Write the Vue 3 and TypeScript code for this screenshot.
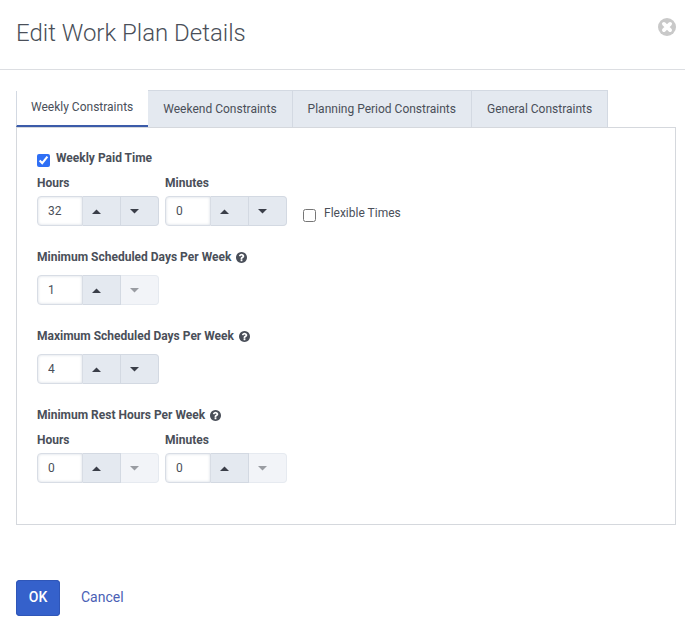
<script setup lang="ts">
import { ref } from 'vue'

interface Field {
  id: string
  label: string
  value: number
  min: number
  max: number
}

interface Group {
  id: string
  title: string
  toggle: boolean
  fields: Field[]
}

const tabs: string[] = [
  'Weekly Constraints',
  'Weekend Constraints',
  'Planning Period Constraints',
  'General Constraints',
]
const activeTab = ref(0)
const weeklyPaid = ref(true)
const flexible = ref(false)

const groups = ref<Group[]>([
  {
    id: 'paid',
    title: 'Weekly Paid Time',
    toggle: true,
    fields: [
      { id: 'paid-hours', label: 'Hours', value: 32, min: 0, max: 168 },
      { id: 'paid-minutes', label: 'Minutes', value: 0, min: -1, max: 59 },
    ],
  },
  {
    id: 'min-days',
    title: 'Minimum Scheduled Days Per Week',
    toggle: false,
    fields: [{ id: 'min-days-value', label: '', value: 1, min: 1, max: 7 }],
  },
  {
    id: 'max-days',
    title: 'Maximum Scheduled Days Per Week',
    toggle: false,
    fields: [{ id: 'max-days-value', label: '', value: 4, min: 1, max: 7 }],
  },
  {
    id: 'rest',
    title: 'Minimum Rest Hours Per Week',
    toggle: false,
    fields: [
      { id: 'rest-hours', label: 'Hours', value: 0, min: 0, max: 168 },
      { id: 'rest-minutes', label: 'Minutes', value: 0, min: 0, max: 59 },
    ],
  },
])

// Stepping below zero minutes wraps round to 59.
function step(field: Field, delta: number): void {
  const next = field.value + delta
  field.value = next < 0 ? field.max : Math.min(field.max, next)
}
</script>

<template>
  <main class="dialog">
    <header class="header">
      <h1 class="title">Edit Work Plan Details</h1>
      <button class="close" type="button" aria-label="Close">
        <svg viewBox="0 0 18 18" width="18" height="18" aria-hidden="true">
          <circle cx="9" cy="9" r="9" fill="#c9c9c9" />
          <path
            d="M5.9 5.9 12.1 12.1M12.1 5.9 5.9 12.1"
            stroke="#fff"
            stroke-width="3.8"
            stroke-linecap="round"
          />
        </svg>
      </button>
    </header>

    <form class="body" @submit.prevent>
      <div class="tabs" role="tablist">
        <button
          v-for="(tab, i) in tabs"
          :key="tab"
          type="button"
          role="tab"
          class="tab"
          :class="{ active: i === activeTab }"
          :aria-selected="i === activeTab"
          @click="activeTab = i"
        >
          {{ tab }}
        </button>
      </div>

      <section class="panel" role="tabpanel">
        <div v-for="group in groups" :key="group.id" class="group">
          <div class="group-head">
            <template v-if="group.toggle">
              <input :id="group.id" v-model="weeklyPaid" class="check" type="checkbox" />
              <label class="strong" :for="group.id">{{ group.title }}</label>
            </template>
            <template v-else>
              <label class="strong" :for="group.fields[0].id">{{ group.title }}</label>
              <svg class="help" viewBox="0 0 1536 1536" width="11" height="11" aria-hidden="true">
                <path
                  fill="currentColor"
                  d="M896 1248v-192q0-14-9-23t-23-9h-192q-14 0-23 9t-9 23v192q0 14 9 23t23 9h192q14 0 23-9t9-23zM1152 576q0-88-55.5-163t-138.5-116-170-41q-243 0-371 213-15 24 8 42l132 100q7 6 19 6 16 0 25-12 53-68 86-92 34-24 86-24 48 0 85.5 26t37.5 59q0 38-20 61t-68 45q-63 28-115.5 86.5t-52.5 125.5v36q0 14 9 23t23 9h192q14 0 23-9t9-23q0-19 21.5-49.5t54.5-49.5q32-18 49-28.5t46-35 44.5-48 28-60.5 12.5-81zM1536 768q0 209-103 385.5t-279.5 279.5-385.5 103-385.5-103-279.5-279.5-103-385.5 103-385.5 279.5-279.5 385.5-103 385.5 103 279.5 279.5 103 385.5z"
                />
              </svg>
            </template>
          </div>

          <div class="fields">
            <div v-for="field in group.fields" :key="field.id" class="field">
              <label v-if="field.label" class="strong" :for="field.id">{{ field.label }}</label>
              <div class="spinner">
                <input
                  :id="field.id"
                  v-model.number="field.value"
                  class="number"
                  type="text"
                  inputmode="numeric"
                />
                <button
                  class="step"
                  type="button"
                  aria-label="Increase"
                  :disabled="field.value >= field.max"
                  @click="step(field, 1)"
                >
                  <svg viewBox="0 0 9 5" width="9" height="5" aria-hidden="true">
                    <path d="M0 5 4.5 0.5 9 5z" fill="currentColor" />
                  </svg>
                </button>
                <button
                  class="step"
                  type="button"
                  aria-label="Decrease"
                  :disabled="field.value <= field.min"
                  @click="step(field, -1)"
                >
                  <svg viewBox="0 0 9 5" width="9" height="5" aria-hidden="true">
                    <path d="M0 0 4.5 4.5 9 0z" fill="currentColor" />
                  </svg>
                </button>
              </div>
            </div>
            <div v-if="group.toggle" class="flexible">
              <input id="flexible" v-model="flexible" class="check" type="checkbox" />
              <label for="flexible">Flexible Times</label>
            </div>
          </div>
        </div>
      </section>

      <footer class="footer">
        <button class="ok" type="submit">OK</button>
        <button class="cancel" type="button">Cancel</button>
      </footer>
    </form>
  </main>
</template>

<style>
body {
  background: #fff;
}
</style>

<style scoped>
.dialog {
  font-family: Roboto, 'Liberation Sans', sans-serif;
  font-size: 12px;
  line-height: 20px;
  color: #4a4f59;
}

button,
input {
  font: inherit;
  color: inherit;
}

button {
  cursor: pointer;
}

.header {
  display: flex;
  justify-content: space-between;
  align-items: flex-start;
  padding: 18px 9px 19px 16px;
  border-bottom: 1px solid #dcdee2;
}

.title {
  margin: 0;
  font-size: 24px;
  font-weight: 300;
  line-height: 30px;
  padding-bottom: 2px;
}

.close {
  display: flex;
  padding: 0;
  border: 0;
  background: none;
}

.body {
  padding: 20px 9px 16px 16px;
}

.tabs {
  display: flex;
  align-items: flex-end;
}

.tab {
  height: 37px;
  padding: 0 15px;
  border: 1px solid #d3d9e2;
  border-width: 1px 1px 0 0;
  background: #e4e9f0;
  white-space: nowrap;
}

.tab.active {
  height: 36px;
  padding: 0 15px 2px 14px;
  border-width: 0 0 2px 1px;
  border-bottom-color: #3b5ba9;
  background: #fff;
}

.panel {
  display: flex;
  flex-direction: column;
  gap: 21px;
  padding: 20px 20px 41px;
  border: 1px solid #d5d8dd;
}

.strong {
  font-weight: 700;
}

.group-head {
  display: flex;
  align-items: center;
  gap: 5px;
}

.check {
  flex: none;
  width: 13px;
  height: 13px;
  margin: 5px 1px 0 0;
  accent-color: #2f6ff5;
}

.help {
  margin-top: 1px;
}

.fields {
  display: flex;
  align-items: flex-end;
  gap: 6px;
  margin-top: 8px;
}

.fields:has(label) {
  margin-top: 5px;
}

.field {
  display: flex;
  flex-direction: column;
  gap: 3px;
}

.spinner {
  display: flex;
  width: 122px;
  height: 30px;
}

.number {
  box-sizing: border-box;
  width: 46px;
  padding: 0 10px;
  border: 1px solid #d8dde5;
  border-radius: 4px 0 0 4px;
  background: #fff;
  box-shadow: inset 0 0 3px #d5dae2;
}

.step {
  display: flex;
  flex: 1;
  align-items: center;
  padding: 1px 0 0 9px;
  border: 1px solid #d3d9e2;
  border-left-width: 0;
  background: #e4e9f0;
  color: #3a3e48;
}

.step:last-child {
  border-radius: 0 4px 4px 0;
}

.step:disabled {
  border-color: #e6eaf0;
  background: #f2f4f8;
  color: #999ca2;
  cursor: default;
}

.flexible {
  display: flex;
  align-items: center;
  gap: 7px;
  height: 26px;
  margin-left: 10px;
}

.footer {
  display: flex;
  gap: 6px;
  margin-top: 55px;
  font-size: 14px;
}

.ok,
.cancel {
  height: 36px;
  padding: 0 15px 2px;
  border: 0;
  border-radius: 4px;
}

.ok {
  min-width: 44px;
  padding: 0 12px 2px;
  background: #3561cb;
  box-shadow: inset 0 0 0 1px #2f56b8;
  color: #fff;
  font-weight: 500;
}

.cancel {
  background: none;
  color: #4a5fb5;
}
</style>
